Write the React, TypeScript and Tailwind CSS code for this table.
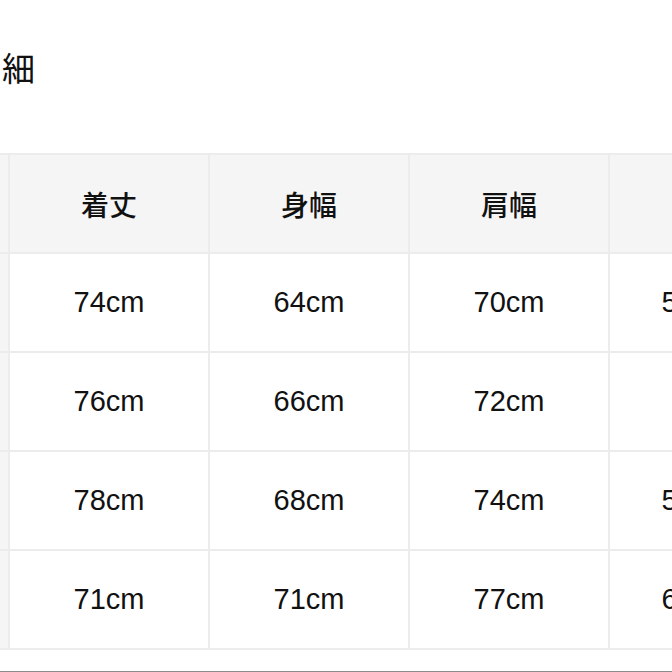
const headers = ["", "着丈", "身幅", "肩幅", ""];

const rows = [
  ["", "74cm", "64cm", "70cm", "54.5cm"],
  ["", "76cm", "66cm", "72cm", ""],
  ["", "78cm", "68cm", "74cm", "56.5cm"],
  ["", "71cm", "71cm", "77cm", "60.5cm"],
];

export default function App() {
  return (
    <div className="flex h-[672px] w-[672px] flex-col overflow-hidden bg-white text-[#111]">
      <h2 className="pl-[2px] pt-[47px] text-[33px] leading-[40px] font-normal [font-family:'Noto_Sans_CJK_JP',sans-serif]">
        細
      </h2>

      <div className="mt-[66px] overflow-hidden">
        <div className="ml-[-190px] grid w-max grid-cols-[198px_198px_198px_198px_198px] gap-[2px] border-y-2 border-[#ececec] bg-[#ececec]">
          {headers.map((h, i) => (
            <div
              key={`h${i}`}
              className="flex h-[97px] items-center justify-center bg-[#f5f5f5] text-[28px] font-medium [font-family:'Noto_Sans_CJK_JP',sans-serif]"
            >
              {h}
            </div>
          ))}
          {rows.map((row, r) =>
            row.map((cell, c) => (
              <div
                key={`${r}-${c}`}
                className={`flex h-[97px] items-center justify-center text-[29px] [font-family:'Liberation_Sans',Arial,sans-serif] ${
                  c === 0 ? "bg-[#f5f5f5]" : "bg-white"
                }`}
              >
                {cell}
              </div>
            ))
          )}
        </div>
      </div>

      <div className="mt-auto h-px w-full bg-[#8a8a8a]" />
    </div>
  );
}
